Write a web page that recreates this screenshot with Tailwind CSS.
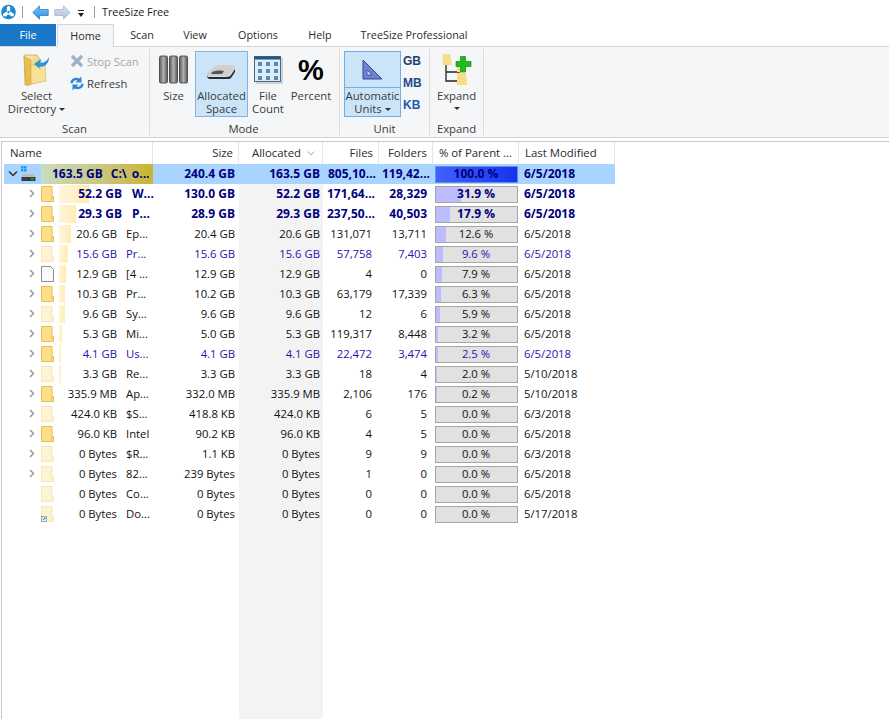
<!DOCTYPE html>
<html lang="en">
  <head>
    <meta charset="UTF-8" />
    <title>TreeSize Free</title>
    <script src="https://cdn.jsdelivr.net/npm/@tailwindcss/browser@4"></script>
  </head>
  <body class="bg-white font-['Open_Sans','Noto_Sans',sans-serif] text-[11.3px] text-[#2b2b2b] overflow-hidden">
    <svg class="absolute w-0 h-0">
      <defs>
        <linearGradient id="gBar" x1="0" x2="1" y1="0" y2="0"><stop offset="0" stop-color="#5c5c5c"/><stop offset=".5" stop-color="#b0b0b0"/><stop offset="1" stop-color="#585858"/></linearGradient>
        <linearGradient id="gFolder" x1="0" x2="1" y1="0" y2="1"><stop offset="0" stop-color="#fbeeb4"/><stop offset="1" stop-color="#e6bd5e"/></linearGradient>
        <linearGradient id="gLeft" x1="0" x2="0" y1="0" y2="1"><stop offset="0" stop-color="#7cc4f5"/><stop offset="1" stop-color="#2a8fe0"/></linearGradient>
        <linearGradient id="gRight" x1="0" x2="0" y1="0" y2="1"><stop offset="0" stop-color="#d6e0ee"/><stop offset="1" stop-color="#b2c3da"/></linearGradient>
      </defs>
    </svg>
    <div class="h-[719px] w-[889px] flex flex-col overflow-hidden">
      <!-- title bar -->
      <div class="h-[24px] flex items-center">
        <svg class="ml-[1px] w-[15px] h-[16px]" viewBox="0 0 16 16"><circle cx="8" cy="8" r="7.800" fill="#1d8ccf"/><path d="M8 8V3.500M8 8l-4 3M8 8l4 3" stroke="#fff" stroke-width="3.600" stroke-linecap="round"/><circle cx="8" cy="8" r="1.300" fill="#1d8ccf"/></svg>
        <div class="ml-[6px] w-px h-[12px] bg-[#9a9a9a]"></div>
        <svg class="ml-[9px] w-[17px] h-[15px]" viewBox="0 0 17 15"><path d="M.8 7.500 7.500.8v3.700h8.700v6H7.500v3.700z" fill="url(#gLeft)" stroke="#2a7fd0" stroke-width=".8"/></svg>
        <svg class="ml-[5px] w-[17px] h-[15px]" viewBox="0 0 17 15"><path d="M16.200 7.500 9.500.8v3.700H.8v6h8.700v3.700z" fill="url(#gRight)" stroke="#a8b8ce" stroke-width=".8"/></svg>
        <svg class="ml-[6px] w-[8px] h-[8px] mt-[3px]" viewBox="0 0 8 8"><path d="M1 0h6v1H1zM1 3h6L4 7z" fill="#222"/></svg>
        <div class="ml-[9px] w-px h-[12px] bg-[#9a9a9a]"></div>
        <span class="ml-[7px] text-[10.8px] text-[#222]">TreeSize Free</span>
      </div>
      <!-- tabs -->
      <div class="h-[22px] flex items-stretch relative z-10 text-[10.8px]">
        <div class="w-[56px] bg-[#1a78c8] text-white flex items-center justify-center">File</div>
        <div class="ml-[1px] w-[57px] bg-[#f5f6f7] border border-b-0 border-[#d5d5d5] flex items-center justify-center -mb-px">Home</div>
        <div class="w-[56px] flex items-center justify-center">Scan</div>
        <div class="w-[50px] flex items-center justify-center">View</div>
        <div class="w-[76px] flex items-center justify-center">Options</div>
        <div class="w-[48px] flex items-center justify-center">Help</div>
        <div class="w-[140px] flex items-center justify-center whitespace-nowrap">TreeSize Professional</div>
      </div>
      <!-- ribbon -->
      <div class="h-[92px] bg-[#f5f6f7] border-y border-[#d5d5d5] flex items-stretch text-[#3b3b3b] leading-[13px]">
        <div class="w-[149px] relative flex">
          <div class="w-[70px] pl-[3px] pt-[7px] flex flex-col items-center">
            <svg class="w-[28px] h-[32px]" viewBox="0 0 28 32"><path d="M1 1h13l5 8v17L6 31H2z" fill="url(#gFolder)" stroke="#c9a23c" stroke-width=".7"/><path d="M1 2 8 6v22l-2 3H3z" fill="#e8bd52" stroke="#c9a23c" stroke-width=".5"/><path d="M8 11h14l1 16-15 3z" fill="#f9e295" stroke="#d6b04e" stroke-width=".6"/><path d="M26 3c0 6-3 10-10 10l2 3-7-6 7-5-1 4c4 0 7-2 9-6z" fill="#2f95e0"/></svg>
            <div class="mt-[3px] text-center">Select<br />Directory<svg class="inline-block ml-[3px] mb-[1px] w-[6px] h-[3px]" viewBox="0 0 6 3"><path d="M0 0h6L3 3z" fill="#333"/></svg></div>
          </div>
          <div class="pt-[6px] flex flex-col gap-[6px]">
            <div class="h-[16px] flex items-center gap-[3px] text-[#a6a6a6]">
              <svg class="w-[14px] h-[14px]" viewBox="0 0 14 14"><path d="M2 2l10 10M12 2 2 12" stroke="#9fb0c4" stroke-width="3.200"/></svg>Stop Scan
            </div>
            <div class="h-[16px] flex items-center gap-[3px]">
              <svg class="w-[14px] h-[15px]" viewBox="0 0 14 15"><path d="M.5 7C.5 3 5 .5 9.500 2.500L11.500.5V6.500H5.500L7.500 4.500C5 3.500 3 5 2.500 7.500zM13.500 8c0 4-4.500 6.500-9 4.500l-2 2V8.500h6l-2 2c2.500 1 4.500-.5 5-3z" fill="#2b85d6"/></svg>Refresh
            </div>
          </div>
          <div class="absolute left-0 right-0 bottom-0 leading-[16px] text-center">Scan</div>
        </div>
        <div class="w-px my-[2px] bg-[#dcdcdc]"></div>
        <div class="w-[189px] relative flex pl-[9px]">
          <div class="w-[29px] mr-[7px] pt-[8px] flex flex-col items-center">
            <svg class="w-[29px] h-[29px]" viewBox="0 0 29 29"><g fill="url(#gBar)" stroke="#3a3a3a" stroke-width=".8"><rect x=".5" y="1" width="8" height="27" rx="1.500"/><rect x="10.500" y="1" width="8" height="27" rx="1.500"/><rect x="20.500" y="1" width="8" height="27" rx="1.500"/></g></svg>
            <div class="mt-[5px] text-center">Size</div>
          </div>
          <div class="w-[53px] h-[66px] mt-[4px] bg-[#cce4f7] border border-[#7fb4e4] flex flex-col items-center pt-[9px]">
            <svg class="w-[33px] h-[22px]" viewBox="0 0 33 22"><path d="M2 12 11 5c1-1 2-1 4-1h12c3 0 4 2 3 3l-5 6c-1 2-3 2-5 2H4c-2 0-3-2-2-3z" fill="#cfcfcf"/><path d="M6 12c2-2 6-3 13-2l-2 3H7z" fill="#555"/><path d="M2 13c0 3 1 3 2 3h17c3 0 4-1 5-2l4-6v3l-4 6c-1 1-2 1-4 1H5c-2 0-3-2-3-3z" fill="#2b2b2b"/></svg>
            <div class="mt-[6px] text-center">Allocated<br />Space</div>
          </div>
          <div class="w-[40px] pt-[9px] flex flex-col items-center">
            <svg class="w-[29px] h-[28px]" viewBox="0 0 29 28"><rect x="2" y="2" width="27" height="26" fill="#cfd3d8"/><rect x=".5" y=".5" width="26" height="25" fill="#dcebf8" stroke="#46698c"/><rect x=".5" y=".5" width="26" height="3" fill="#27567f"/><g fill="#5d89b0"><rect x="4" y="6" width="4" height="4"/><rect x="12" y="6" width="4" height="4"/><rect x="20" y="6" width="4" height="4"/><rect x="4" y="13" width="4" height="4"/><rect x="12" y="13" width="4" height="4"/><rect x="20" y="13" width="4" height="4"/><rect x="4" y="20" width="4" height="4"/><rect x="12" y="20" width="4" height="4"/><rect x="20" y="20" width="4" height="4"/></g></svg>
            <div class="mt-[5px] text-center">File<br />Count</div>
          </div>
          <div class="w-[46px] flex flex-col items-center">
            <div class="h-[42px] text-[29px] leading-[46px] font-bold text-black font-['Liberation_Sans',sans-serif]">%</div>
            <div>Percent</div>
          </div>
          <div class="absolute left-0 right-0 bottom-0 leading-[16px] text-center -ml-[2px]">Mode</div>
        </div>
        <div class="w-px my-[2px] bg-[#dcdcdc]"></div>
        <div class="w-[89px] relative flex pl-[4px]">
          <div class="w-[57px] h-[66px] mt-[4px] bg-[#cce4f7] border border-[#6fb0ea] flex flex-col items-center">
            <div class="h-[36px] shrink-0 w-full border-b border-[#6fb0ea] flex justify-center items-center">
              <svg class="w-[21px] h-[21px]" viewBox="0 0 21 21"><path d="M1 1 20 20H1z" fill="#6f80d2" stroke="#35478f"/><path d="M5 11l5 5H5z" fill="#cce4f7" stroke="#35478f" stroke-width=".8"/></svg>
            </div>
            <div class="text-center pt-[1px]">Automatic<br />Units<svg class="inline-block ml-[3px] mb-[1px] w-[6px] h-[3px]" viewBox="0 0 6 3"><path d="M0 0h6L3 3z" fill="#333"/></svg></div>
          </div>
          <div class="ml-[2px] pt-[6px] flex flex-col gap-[6px] font-bold text-[12px] leading-[16px] font-['Liberation_Sans',sans-serif]">
            <span class="text-[#243f6b]">GB</span><span class="text-[#25488c]">MB</span><span class="text-[#2558ad]">KB</span>
          </div>
          <div class="absolute left-0 right-0 bottom-0 leading-[16px] text-center">Unit</div>
        </div>
        <div class="w-px my-[2px] bg-[#dcdcdc]"></div>
        <div class="w-[53px] relative flex flex-col items-center pt-[7px]">
          <svg class="w-[30px] h-[32px]" viewBox="0 0 30 32"><path d="M4 10v17h13M4 18h14" fill="none" stroke="#222" stroke-width="1.300"/><path d="M.5 0h8l1 11H.5z" fill="#f9dc86"/><path d="M15 12h9v6h-9zM15 19h9l1 12h-10z" fill="#f9dc86"/><path d="M18.500 2.500h5v5h5.500v5h-5.500v5.500h-5v-5.500H14v-5h4.500z" fill="#1cbc1c" stroke="#128c12" stroke-width=".7"/></svg>
          <div class="mt-[3px]">Expand</div>
          <svg class="mt-[5px] w-[6px] h-[3px]" viewBox="0 0 6 3"><path d="M0 0h6L3 3z" fill="#333"/></svg>
          <div class="absolute left-0 right-0 bottom-0 leading-[16px] text-center">Expand</div>
        </div>
        <div class="w-px my-[2px] bg-[#dcdcdc]"></div>
      </div>
      <!-- tree list -->
      <div class="relative flex-1 mt-[3px] ml-[1px] border-t border-l border-[#c8c8c8] pl-[2px]">
        <div class="absolute left-[237px] w-[84px] top-[22px] bottom-0 bg-[#f3f3f3]"></div>
        <div id="tabla" class="relative w-[611px]"></div>
      </div>
    </div>
    <script>
      const filas = [
        ["52.2 GB", "W...", "130.0 GB", "171,64...", "28,329", 31.9, "6/5/2018", "b", 1, 30, 1],
        ["29.3 GB", "P...", "28.9 GB", "237,50...", "40,503", 17.9, "6/5/2018", "b", 1, 17, 1],
        ["20.6 GB", "Ep...", "20.4 GB", "131,071", "13,711", 12.6, "6/5/2018", "n", 1, 12, 1],
        ["15.6 GB", "Pr...", "15.6 GB", "57,758", "7,403", 9.6, "6/5/2018", "c", 0, 9, 1],
        ["12.9 GB", "[4 ...", "12.9 GB", "4", "0", 7.9, "6/5/2018", "n", 2, 7, 1],
        ["10.3 GB", "Pr...", "10.2 GB", "63,179", "17,339", 6.3, "6/5/2018", "n", 1, 6, 1],
        ["9.6 GB", "Sy...", "9.6 GB", "12", "6", 5.9, "6/5/2018", "n", 0, 6, 1],
        ["5.3 GB", "Mi...", "5.0 GB", "119,317", "8,448", 3.2, "6/5/2018", "n", 1, 3, 1],
        ["4.1 GB", "Us...", "4.1 GB", "22,472", "3,474", 2.5, "6/5/2018", "c", 1, 2, 1],
        ["3.3 GB", "Re...", "3.3 GB", "18", "4", 2.0, "5/10/2018", "n", 0, 2, 1],
        ["335.9 MB", "Ap...", "332.0 MB", "2,106", "176", 0.2, "5/10/2018", "n", 1, 0, 1],
        ["424.0 KB", "$S...", "418.8 KB", "6", "5", 0.0, "6/3/2018", "n", 0, 0, 1],
        ["96.0 KB", "Intel", "90.2 KB", "4", "5", 0.0, "6/5/2018", "n", 1, 0, 1],
        ["0 Bytes", "$R...", "1.1 KB", "9", "9", 0.0, "6/3/2018", "n", 0, 0, 1],
        ["0 Bytes", "82...", "239 Bytes", "1", "0", 0.0, "6/5/2018", "n", 0, 0, 1],
        ["0 Bytes", "Co...", "0 Bytes", "0", "0", 0.0, "6/5/2018", "n", 0, 0, 0],
        ["0 Bytes", "Do...", "0 Bytes", "0", "0", 0.0, "5/17/2018", "n", 3, 0, 0],
      ];

      const celda = "h-[20px] flex items-center justify-end shrink-0 whitespace-nowrap";
      const estilos = {
        b: "font-bold text-[12px] text-[#000080]",
        c: "text-[#2a12b0]",
        n: "text-[#111111]",
      };

      function icono(tipo) {
        if (tipo === 2) {
          return `<svg class="w-[13px] h-[16px]" viewBox="0 0 13 16"><path d="M.5.5h9l3 3v12H.5z" fill="#fafafa" stroke="#8f8f8f"/></svg>`;
        }
        const fill = tipo === 1 ? "#fedf88" : "#fef4d4";
        const stroke = tipo === 1 ? "#e9bd52" : "#f6e8ba";
        const atajo = tipo === 3 ? `<rect x=".5" y="10.500" width="5" height="5" fill="#e8eef5" stroke="#7b8fa5" stroke-width=".7"/><path d="M2 14l2-2M3 12h1v1" stroke="#1c5fa8" stroke-width=".8" fill="none"/>` : "";
        return `<svg class="w-[13px] h-[16px]" viewBox="0 0 13 16"><path d="M.5.5h10.500v10h1.500v5H.5z" fill="${fill}" stroke="${stroke}"/><path d="M11 10.500v2.500h-1" fill="none" stroke="${stroke}"/>${atajo}</svg>`;
      }

      function flecha() {
        return `<svg class="w-[6px] h-[9px]" viewBox="0 0 6 9"><path d="M1 1l3.500 3.500L1 8" fill="none" stroke="#9a9a9a" stroke-width="1.500"/></svg>`;
      }

      const tabla = document.getElementById("tabla");

      tabla.innerHTML = `
        <div class="h-[22px] flex items-center text-[11.4px] text-[#2b2b2b]">
          <div class="w-[149px] pl-[6px] h-full flex items-center border-r border-[#e5e5e5] shrink-0">Name</div>
          <div class="w-[86px] pr-[5px] h-full flex items-center justify-end border-r border-[#e5e5e5] shrink-0">Size</div>
          <div class="w-[84px] pl-[13px] h-full flex items-center gap-[6px] border-r border-[#e5e5e5] shrink-0">Allocated<svg class="w-[8px] h-[5px]" viewBox="0 0 8 5"><path d="M.5.500 4 4 7.500.500" fill="none" stroke="#a8a8a8"/></svg></div>
          <div class="w-[56px] pr-[5px] h-full flex items-center justify-end border-r border-[#e5e5e5] shrink-0">Files</div>
          <div class="w-[54px] pr-[5px] h-full flex items-center justify-end border-r border-[#e5e5e5] shrink-0">Folders</div>
          <div class="w-[86px] h-full flex items-center justify-center border-r border-[#e5e5e5] shrink-0">% of Parent ...</div>
          <div class="w-[96px] pl-[6px] h-full flex items-center border-r border-[#e5e5e5] shrink-0">Last Modified</div>
        </div>
        <div class="h-[20px] flex items-center bg-[#a8d4ff] font-bold text-[12px] text-[#000080]">
          <div class="w-[149px] h-full flex items-center shrink-0">
            <svg class="ml-[4px] w-[10px] h-[6px] shrink-0" viewBox="0 0 10 6"><path d="M1 .500l4 4 4-4" fill="none" stroke="#333" stroke-width="1.500"/></svg>
            <svg class="ml-[3px] w-[15px] h-[16px] shrink-0" viewBox="0 0 15 16"><path d="M0 0h2.500v2.500H0zM3 0h2.500v2.500H3zM0 3h2.500v2.500H0zM3 3h2.500v2.500H3z" fill="#1e9be8"/><path d="M2 8h11l1.500 3H.5z" fill="#b9bcc0"/><rect x=".5" y="11" width="14" height="4" fill="#3a3d40"/><rect x="10" y="12.500" width="3" height="1" fill="#3ddc3d"/></svg>
            <div class="ml-[5px] h-full flex-1 flex items-center bg-gradient-to-r from-[#c9dcc0] to-[#c8b42c] whitespace-nowrap"><span class="ml-[11px]">163.5 GB</span><span class="ml-[8px]">C:\\</span><span class="ml-[5px]">o...</span></div>
          </div>
          <div class="${celda} w-[86px] pr-[4px]">240.4 GB</div>
          <div class="${celda} w-[84px] pr-[3px]">163.5 GB</div>
          <div class="${celda} w-[56px] pr-[3px]">805,10...</div>
          <div class="${celda} w-[54px] pr-[3px]">119,42...</div>
          <div class="${celda} w-[86px] !justify-center"><div class="w-[83px] h-[17px] border border-[#5f93d8] bg-gradient-to-r from-[#4060ff] to-[#1a30f0] flex items-center justify-center">100.0 %</div></div>
          <div class="${celda} w-[96px] !justify-start pl-[5px]">6/5/2018</div>
        </div>
      ` + filas.map((f) => {
        const negrita = f[7] === "b";
        return `
        <div class="h-[20px] flex items-center ${estilos[f[7]]}">
          <div class="w-[149px] h-full relative shrink-0">
            <div class="absolute left-[25px] top-[5px]">${f[10] ? flecha() : ""}</div>
            <div class="absolute left-[37px] top-[2px]">${icono(f[8])}</div>
            <div class="absolute left-[55px] top-[1px] bottom-[1px] bg-gradient-to-r from-[#fef6da] to-[#fdedb4]" style="width:${f[9]}px"></div>
            <div class="absolute top-0 h-full flex items-center whitespace-nowrap ${negrita ? "right-[31px]" : "right-[36px]"}">${f[0]}</div>
            <div class="absolute top-0 h-full flex items-center whitespace-nowrap ${negrita ? "left-[128px]" : "left-[122px]"}">${f[1]}</div>
          </div>
          <div class="${celda} w-[86px] pr-[4px]">${f[2]}</div>
          <div class="${celda} w-[84px] pr-[3px]">${f[0]}</div>
          <div class="${celda} w-[56px] ${negrita ? "pr-[4px]" : "pr-[7px]"}">${f[3]}</div>
          <div class="${celda} w-[54px] pr-[6px]">${f[4]}</div>
          <div class="${celda} w-[86px] !justify-center">
            <div class="relative w-[83px] h-[17px] border border-[#a6a6a6] bg-[#e1e1e1] flex items-center justify-center">
              <div class="absolute left-0 top-0 bottom-0 bg-[#bcbcff]" style="width:${f[5]}%"></div>
              <span class="relative">${f[5].toFixed(1)} %</span>
            </div>
          </div>
          <div class="${celda} w-[96px] !justify-start pl-[5px]">${f[6]}</div>
        </div>
      `;
      }).join("");
    </script>
  </body>
</html>
